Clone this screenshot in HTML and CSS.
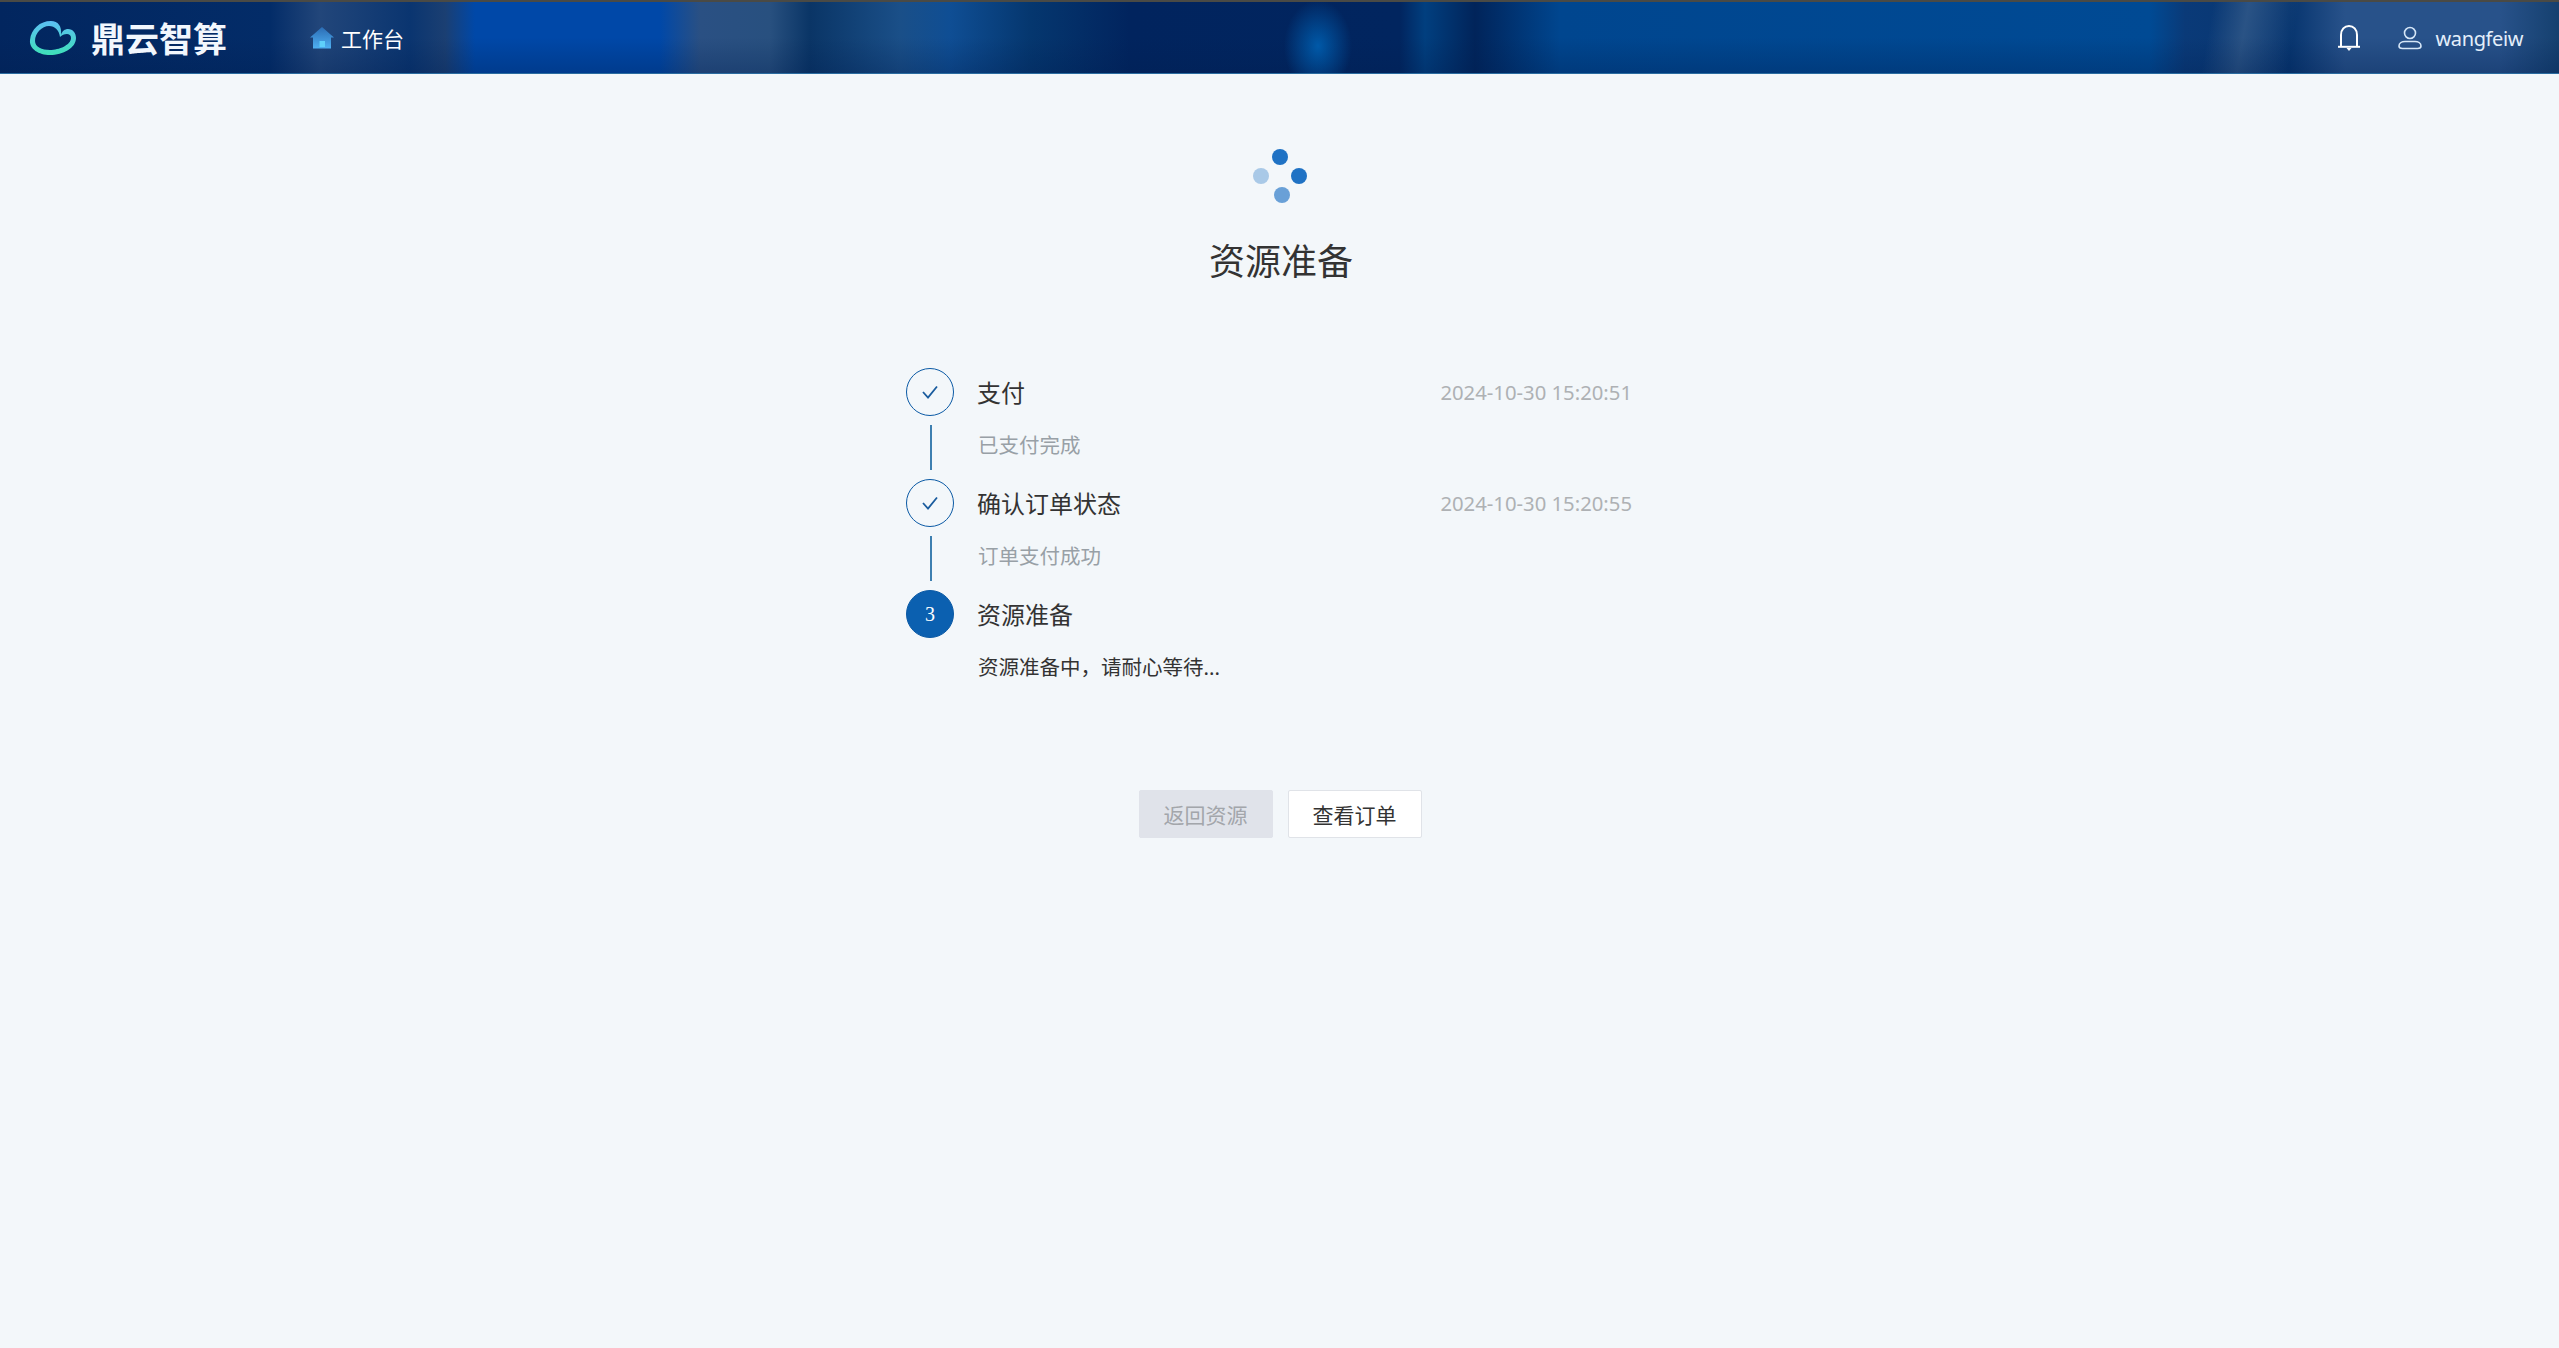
FILE: index.html
```html
<!DOCTYPE html>
<html lang="zh-CN">
<head>
    <meta charset="UTF-8">
    <meta name="viewport" content="width=device-width, initial-scale=1.0">
    <title>资源准备</title>
    <link rel="stylesheet" href="styles.css">
</head>
<body>
    <header class="topbar">
        <div class="topbar-left">
            <div class="logo">
                <svg class="logo-icon" viewBox="0 0 48 36" width="48" height="36">
                    <defs>
                        <linearGradient id="cloud-grad" x1="0" y1="0" x2="0" y2="1">
                            <stop offset="0" stop-color="#5cc0f5"/>
                            <stop offset="1" stop-color="#3fe0b8"/>
                        </linearGradient>
                    </defs>
                    <path fill-rule="evenodd" d="M1 20C2 9 11 1 22 1C29 1 33 6 32 15C33 11 36 9 39 9C44 9 47 13 47 18C47 28 34 35 21 35C10 35 0 29 1 20ZM6 21C6 27 13 30 21 30C30 30 42 25 42 18C42 15 40 14 38 14C35 14 33 15 31 17C30 10 26 6 20 6C13 6 6 13 6 21Z" fill="url(#cloud-grad)"/>
                </svg>
                <span class="logo-text">鼎云智算</span>
            </div>
            <a class="nav-home" href="#">
                <svg viewBox="0 0 24 22" width="24" height="22">
                    <defs>
                        <linearGradient id="home-grad" x1="0" y1="0" x2="0" y2="1">
                            <stop offset="0" stop-color="#2b6cb4"/>
                            <stop offset="1" stop-color="#4fb0f2"/>
                        </linearGradient>
                    </defs>
                    <path d="M12 0L24 10.500H21V21.500H3V10.500H0Z" fill="url(#home-grad)"/>
                    <rect x="9.500" y="14" width="5.500" height="6" fill="#5fd0fa"/>
                </svg>
                <span>工作台</span>
            </a>
        </div>
        <div class="topbar-right">
            <svg class="bell" viewBox="0 0 24 28" width="24" height="28" fill="none" stroke="#fff" stroke-width="2">
                <path d="M4 22.500V11C4 5.500 7.500 2 12 2C16.500 2 20 5.500 20 11V22.500"/>
                <path d="M1 22.800H23"/>
                <path d="M9.500 24H14.500L12 27Z" fill="#fff" stroke="none"/>
            </svg>
            <div class="user">
                <svg viewBox="0 0 24 24" width="24" height="24" fill="none" stroke="#d5e6f7" stroke-width="1.600">
                    <circle cx="12" cy="7" r="5.500"/>
                    <path d="M4.500 22.500H19.500C22 22.500 23 21.500 23 20C23 17 20 15.500 17 15.500H7C4 15.500 1 17 1 20C1 21.500 2 22.500 4.500 22.500Z"/>
                </svg>
                <span class="user-name">wangfeiw</span>
            </div>
        </div>
    </header>

    <main class="content">
        <div class="spinner">
            <i class="dot dot-top"></i>
            <i class="dot dot-right"></i>
            <i class="dot dot-bottom"></i>
            <i class="dot dot-left"></i>
        </div>
        <h1 class="page-title">资源准备</h1>

        <div class="steps">
            <div class="step">
                <div class="step-head">
                    <span class="step-icon">
                        <svg viewBox="0 0 16 14" width="16" height="14" fill="none" stroke="#1a5c9e" stroke-width="1.800">
                            <path d="M1 7L6 12.500L15 1.500"/>
                        </svg>
                    </span>
                    <span class="step-name">支付</span>
                    <span class="step-time">2024-10-30 15:20:51</span>
                </div>
                <div class="step-body">
                    <span class="step-line"></span>
                    <span class="step-desc">已支付完成</span>
                </div>
            </div>
            <div class="step">
                <div class="step-head">
                    <span class="step-icon">
                        <svg viewBox="0 0 16 14" width="16" height="14" fill="none" stroke="#1a5c9e" stroke-width="1.800">
                            <path d="M1 7L6 12.500L15 1.500"/>
                        </svg>
                    </span>
                    <span class="step-name">确认订单状态</span>
                    <span class="step-time">2024-10-30 15:20:55</span>
                </div>
                <div class="step-body">
                    <span class="step-line"></span>
                    <span class="step-desc">订单支付成功</span>
                </div>
            </div>
            <div class="step">
                <div class="step-head">
                    <span class="step-icon step-icon-active">3</span>
                    <span class="step-name">资源准备</span>
                </div>
                <div class="step-body">
                    <span class="step-line step-line-none"></span>
                    <span class="step-desc step-desc-active">资源准备中，请耐心等待...</span>
                </div>
            </div>
        </div>

        <div class="actions">
            <button class="btn btn-disabled">返回资源</button>
            <button class="btn">查看订单</button>
        </div>
    </main>
</body>
</html>
```

FILE: styles.css
```css
* {
    box-sizing: border-box;
}
body {
    margin: 0;
    min-height: 1348px;
    background: #f3f7fa;
    font-family: "Noto Sans", "Noto Sans CJK SC", sans-serif;
    color: #333;
}
.topbar {
    height: 74px;
    display: flex;
    align-items: center;
    justify-content: space-between;
    padding: 0 36px 0 29px;
    color: #fff;
    border-top: 2px solid #4a4a45;
    border-bottom: 1px solid #2a6ca0;
    background:
        radial-gradient(ellipse 34px 46px at 1318px 62%, #0059a8 0, rgba(0,89,168,0) 100%),
        linear-gradient(180deg, rgba(0,30,80,0) 50%, rgba(0,30,80,0.3) 100%),
        linear-gradient(100deg, rgba(42,83,133,0) 2180px, #2a5385 2215px, rgba(42,83,133,0) 2265px),
        linear-gradient(90deg,
            #02265f 0, #032c68 270px, #22467a 320px, #0a3570 410px, #1b3f72 445px, #0048a8 475px,
            #0048a8 660px, #2a5083 700px, #28507f 770px, #0a3566 810px, #1a4f88 900px,
            #0f4e94 950px, #05376f 1030px, #01245e 1130px, #01255f 1400px,
            #013f7f 1425px, #01245a 1475px, #00468f 1560px, #004a94 2150px,
            #0a3a78 2185px, #07356f 2290px, #28528a 2345px, #28528a 2500px,
            #15406f 2559px);
}
.topbar-left,
.topbar-right,
.logo,
.nav-home,
.user {
    display: flex;
    align-items: center;
}
.logo-icon {
    margin-right: 14px;
}
.logo-text {
    font-size: 34px;
    font-weight: 700;
    color: #f2f7fd;
}
.nav-home {
    margin-left: 83px;
    gap: 7px;
    color: #fff;
    font-size: 21px;
    text-decoration: none;
}
.bell {
    margin-right: 37px;
}
.user {
    gap: 14px;
    font-size: 20px;
    letter-spacing: -0.4px;
    color: #e3eefa;
}
.user-name {
    padding-top: 2px;
}
.content {
    display: flex;
    flex-direction: column;
    align-items: center;
    padding-left: 3px;
}
.spinner {
    position: relative;
    width: 56px;
    height: 56px;
    margin-top: 75px;
}
.dot {
    position: absolute;
    width: 16px;
    height: 16px;
    border-radius: 50%;
    background: #1f72c4;
}
.dot-top {
    left: 19px;
    top: 0;
}
.dot-right {
    left: 38px;
    top: 19px;
}
.dot-bottom {
    left: 21px;
    top: 38px;
    opacity: 0.65;
}
.dot-left {
    left: 0;
    top: 19px;
    opacity: 0.35;
}
.page-title {
    margin: 32px 0 0;
    font-size: 36px;
    line-height: 50px;
    font-weight: 400;
    color: #333;
}
.steps {
    width: 746px;
    padding-right: 20px;
    margin: 81px 0 0 -4px;
}
.step-head {
    display: flex;
    align-items: center;
    height: 48px;
}
.step-icon {
    flex: none;
    display: flex;
    align-items: center;
    justify-content: center;
    width: 48px;
    height: 48px;
    margin-right: 23px;
    border: 1.500px solid #0b5aa5;
    border-radius: 50%;
}
.step-icon-active {
    background: #0b60b0;
    color: #fff;
    font-family: "Liberation Serif", serif;
    font-size: 20px;
}
.step-name {
    font-size: 24px;
    padding-bottom: 2px;
    color: #333;
}
.step-time {
    margin-left: auto;
    font-size: 20.300px;
    color: #aeb1b4;
}
.step-body {
    display: flex;
    height: 63px;
}
.step-line {
    width: 2px;
    height: 45px;
    margin: 9px 46px 0 24px;
    background: #3d7fb0;
}
.step-line-none {
    background: none;
}
.step-desc {
    font-size: 20.500px;
    line-height: 58px;
    color: #98a0a6;
}
.step-desc-active {
    color: #333;
}
.actions {
    display: flex;
    gap: 15px;
    margin: 89px 0 0 -2px;
}
.btn {
    width: 134px;
    height: 48px;
    padding: 0;
    font-family: inherit;
    font-size: 21px;
    color: #333;
    background: #fff;
    border: 1px solid #e0e3e8;
    border-radius: 2px;
}
.btn-disabled {
    background: #e0e3ea;
    color: #a3a6ab;
    border-color: #e0e3ea;
}
```
